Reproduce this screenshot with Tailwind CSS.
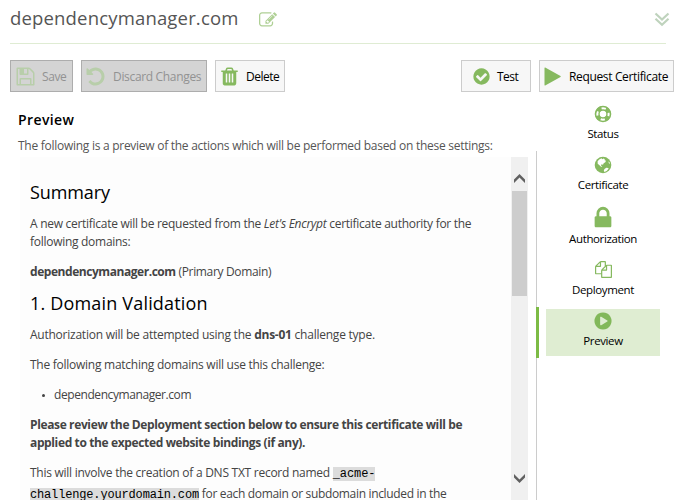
<!DOCTYPE html>
<html lang="en">
<head>
<meta charset="utf-8">
<title>dependencymanager.com</title>
<script src="https://cdn.jsdelivr.net/npm/@tailwindcss/browser@4"></script>
</head>
<body class="bg-white font-['Open_Sans','Noto_Sans',sans-serif] text-[12px] text-[#444]">
<div class="flex h-[500px] w-[680px] flex-col overflow-hidden whitespace-nowrap">
  <header class="mr-[14px] ml-[10px] flex h-[44px] shrink-0 items-start border-b border-[#dfecd3]">
    <h1 class="w-[249px] text-[18.5px] leading-[36px] tracking-[0.17px] text-[#555]">dependencymanager.com</h1>
    <svg class="mt-[11px] size-[18px]" viewBox="0 0 1792 1792" fill="#afd095"><path d="M888 1184l116-116-152-152-116 116v56h96v96h56zm440-720q-16-16-33 1l-350 350q-17 17-1 33t33-1l350-350q17-17 1-33zm80 594v190q0 119-84.500 203.500t-203.500 84.500h-832q-119 0-203.500-84.500t-84.500-203.500v-832q0-119 84.500-203.500t203.500-84.500h832q63 0 117 25 15 7 18 23 3 17-9 29l-49 49q-14 14-32 8-23-6-45-6h-832q-66 0-113 47t-47 113v832q0 66 47 113t113 47h832q66 0 113-47t47-113v-126q0-13 9-22l64-64q15-15 35-7t20 29zm-96-738l288 288-672 672h-288v-288zm444 132l-92 92-288-288 92-92q28-28 68-28t68 28l152 152q28 28 28 68t-28 68z"/></svg>
    <svg class="mt-[12px] -mr-[4px] ml-auto h-[15px] w-[16px]" viewBox="0 0 16 15" fill="none" stroke="#bfd3bd" stroke-width="2.2"><path d="M1.500 1.500L8 7.500L14.500 1.500M1.500 6.800L8 12.800L14.500 6.800"/></svg>
  </header>

  <div class="mt-[16px] mr-[6px] ml-[10px] flex h-[32px] shrink-0 text-[12px] leading-[32px] text-black">
    <button class="flex w-[63px] items-center border border-[#adadad] bg-[#d4d4d4] pl-[4px] text-[#929292]">
      <svg class="mr-[6px] size-[21px]" viewBox="0 0 1792 1792" fill="#b8ceaa"><path d="M512 1536h768v-384h-768v384zm896 0h128v-896q0-14-10-38.500t-20-34.500l-281-281q-10-10-34-20t-39-10v416q0 40-28 68t-68 28h-576q-40 0-68-28t-28-68v-416h-128v1280h128v-416q0-40 28-68t68-28h832q40 0 68 28t28 68v416zm-384-928v-320q0-13-9.500-22.500t-22.500-9.500h-192q-13 0-22.500 9.500t-9.500 22.500v320q0 13 9.500 22.500t22.500 9.500h192q13 0 22.500-9.500t9.500-22.500zm640 32v928q0 40-28 68t-68 28h-1344q-40 0-68-28t-28-68v-1344q0-40 28-68t68-28h928q40 0 88 20t76 48l280 280q28 28 48 76t20 88z"/></svg>
      <span class="mt-[2px] tracking-[-0.4px]">Save</span>
    </button>
    <button class="ml-[8px] flex w-[126px] items-center border border-[#adadad] bg-[#d4d4d4] pl-[3px] text-[#929292]">
      <svg class="mr-[7px] size-[21px]" viewBox="0 0 1792 1792" fill="#b8ceaa"><path d="M1664 896q0 156-61 298t-164 245-245 164-298 61q-172 0-327-72.500t-264-204.500q-7-10-6.500-22.500t8.500-20.500l137-138q10-9 25-9 16 2 23 12 73 95 179 147t225 52q104 0 198.500-40.500t163.500-109.500 109.500-163.500 40.500-198.500-40.500-198.500-109.500-163.500-163.500-109.500-198.500-40.500q-98 0-188 35.500t-160 101.500l137 138q31 30 14 69-17 40-59 40h-448q-26 0-45-19t-19-45v-448q0-42 40-59 39-17 69 14l130 129q107-101 244.500-156.500t284.500-55.500q156 0 298 61t245 164 164 245 61 298z"/></svg>
      <span class="mt-[2px] tracking-[-0.33px]">Discard Changes</span>
    </button>
    <button class="ml-[8px] flex w-[70px] items-center border border-[#ccc] bg-[#f7f7f7] pl-[3px]">
      <svg class="mr-[6px] size-[21px]" viewBox="0 0 1792 1792" fill="#86b95f"><path d="M704 1376v-704q0-14-9-23t-23-9h-64q-14 0-23 9t-9 23v704q0 14 9 23t23 9h64q14 0 23-9t9-23zm256 0v-704q0-14-9-23t-23-9h-64q-14 0-23 9t-9 23v704q0 14 9 23t23 9h64q14 0 23-9t9-23zm256 0v-704q0-14-9-23t-23-9h-64q-14 0-23 9t-9 23v704q0 14 9 23t23 9h64q14 0 23-9t9-23zm-544-992h448l-48-117q-7-9-17-11h-317q-10 2-17 11zm928 32v64q0 14-9 23t-23 9h-96v948q0 83-47 143.500t-113 60.500h-832q-66 0-113-58.500t-47-141.500v-952h-96q-14 0-23-9t-9-23v-64q0-14 9-23t23-9h309l70-167q15-37 54-63t79-26h320q40 0 79 26t54 63l70 167h309q14 0 23 9t9 23z"/></svg>
      <span class="mt-[2px] tracking-[-0.5px]">Delete</span>
    </button>
    <button class="ml-auto flex w-[70px] items-center border border-[#ccc] bg-[#f7f7f7] pl-[10px]">
      <svg class="mr-[6px] size-[19px]" viewBox="0 0 1792 1792" fill="#86b95f"><path d="M1412 734q0-28-18-46l-91-90q-19-19-45-19t-45 19l-408 407-226-226q-19-19-45-19t-45 19l-91 90q-18 18-18 46 0 27 18 45l362 362q19 19 45 19 27 0 46-19l543-543q18-18 18-45zm252 162q0 209-103 385.500t-279.500 279.500-385.500 103-385.500-103-279.500-279.500-103-385.500 103-385.500 279.500-279.500 385.500-103 385.500 103 279.500 279.500 103 385.500z"/></svg>
      <span class="mt-[2px] tracking-[-0.5px]">Test</span>
    </button>
    <button class="ml-[8px] flex w-[135px] items-center border border-[#ccc] bg-[#f7f7f7] pl-[4px]">
      <svg class="mr-[8px] h-[19px] w-[17px]" viewBox="0 0 17 19" fill="#86b95f"><path d="M0.500 1Q0.500 0.300 1.200 0.600L16.500 9Q17 9.500 16.500 10L1.200 18.400Q0.500 18.700 0.500 18Z"/></svg>
      <span class="mt-[2px] tracking-[-0.35px]">Request Certificate</span>
    </button>
  </div>

  <div class="flex min-h-0 flex-1">
    <main class="flex w-[528px] shrink-0 flex-col">
      <h2 class="mt-[17px] ml-[18px] text-[14px] leading-[22px] font-semibold tracking-[0.4px] text-black">Preview</h2>
      <p class="mt-[5px] ml-[18px] text-[12px] leading-[20px] tracking-[-0.27px] text-[#555]">The following is a preview of the actions which will be performed based on these settings:</p>
      <div class="mt-[1px] ml-[20px] flex min-h-0 flex-1">
        <article class="w-[491px] shrink-0 overflow-hidden bg-[#fdfdfd] pl-[10px] text-[12px] leading-[18px]">
          <h3 class="mt-[22px] text-[18px] leading-[26px] tracking-[-0.1px] text-black">Summary</h3>
          <p class="mt-[10px] tracking-[-0.28px]">A new certificate will be requested from the <em>Let's Encrypt</em> certificate authority for the<br>following domains:</p>
          <p class="mt-[12px] tracking-[-0.33px]"><b class="tracking-[-0.45px]">dependencymanager.com</b> (Primary Domain)</p>
          <h3 class="mt-[9px] text-[18px] leading-[26px] tracking-[0.18px] text-black">1. Domain Validation</h3>
          <p class="mt-[10px] tracking-[-0.24px]">Authorization will be attempted using the <b>dns-01</b> challenge type.</p>
          <p class="mt-[12px] tracking-[-0.26px]">The following matching domains will use this challenge:</p>
          <ul class="mt-[12px] flex"><li class="flex items-center gap-[9px] pl-[12px] tracking-[-0.42px]"><i class="size-[3px] rounded-full bg-[#444]"></i>dependencymanager.com</li></ul>
          <p class="mt-[12px] font-bold tracking-[-0.37px]">Please review the Deployment section below to ensure this certificate will be<br>applied to the expected website bindings (if any).</p>
          <p class="mt-[11px] leading-[20px] tracking-[-0.26px]">This will involve the creation of a DNS TXT record named <code class="bg-[#dcdcdc] font-['Liberation_Mono',monospace] text-[12px] tracking-[-0.1px] text-black">_acme-</code><br><code class="bg-[#dcdcdc] font-['Liberation_Mono',monospace] text-[12px] tracking-[-0.16px] text-black">challenge.yourdomain.com</code><span class="tracking-[-0.33px]"> for each domain or subdomain included in the</span></p>
        </article>
        <div class="flex w-[17px] flex-col bg-[#f0f0f0]">
          <svg class="mt-[16px] ml-[3px] h-[11px] w-[11px] shrink-0" viewBox="0 0 11 11" fill="#606060"><path d="M5.500 1L11 6.500V10L5.500 4.500L0 10V6.500Z"/></svg>
          <div class="mt-[7px] ml-px h-[105px] w-[15px] shrink-0 bg-[#cdcdcd]"></div>
          <svg class="mt-auto mb-[16px] ml-[3px] h-[11px] w-[11px] shrink-0" viewBox="0 0 11 11" fill="#606060"><path d="M5.500 10L11 4.500V1L5.500 6.500L0 1V4.500Z"/></svg>
        </div>
      </div>
    </main>

    <aside class="flex flex-1 text-[11.500px] leading-[16px] tracking-[-0.38px] text-black">
      <div class="mt-[59px] ml-[8px] flex w-[3px] flex-col border-l border-[#ccc]">
        <div class="mt-[156px] -ml-px h-[51px] w-[3px] bg-[#7cbb45]"></div>
      </div>
      <nav class="ml-[7px] flex w-[114px] flex-col text-center">
        <a class="flex h-[51px] flex-col items-center pt-[12px]">
          <svg class="h-[20px] w-[20px]" viewBox="0 0 20 20" fill="none" stroke="#86b95f"><circle cx="10" cy="10" r="7.500" stroke-width="1.600"/><circle cx="10" cy="10" r="4" stroke-width="1.400"/><circle cx="10" cy="10" r="5.800" stroke-width="4.200" stroke-dasharray="4.710 4.400" stroke-dashoffset="-2.200"/></svg>
          <span class="mt-[2px]">Status</span>
        </a>
        <a class="flex h-[51px] flex-col items-center pt-[12px]">
          <svg class="h-[20px] w-[20px]" viewBox="0 0 20 20"><circle cx="10" cy="10" r="8.300" fill="#86b95f"/><path fill="#fff" d="M6.200 4.500L8.500 3.200L9.300 4.200L10.600 3.500L12 4.300L11.300 5.100L13 5.700L12.300 7.300L10.700 8.300L10 9.800L8.500 9.300L8 10.500L9.300 12L8 11.800L6.200 9.900L4.700 8.800L4.600 6.300ZM11.500 14L13.300 12.700L15.200 12.900L15.600 13.700Q14 16.300 11.400 17L10.800 15.500ZM15.400 6.400L16.400 7L17 9L15.900 8.300Z"/></svg>
          <span class="mt-[2px]">Certificate</span>
        </a>
        <a class="flex h-[54px] flex-col items-center pt-[11px]">
          <svg class="h-[26px] w-[26px] shrink-0" viewBox="0 0 1792 1792" fill="#86b95f"><path d="M640 768h512v-192q0-106-75-181t-181-75-181 75-75 181v192zm832 96v576q0 40-28 68t-68 28h-960q-40 0-68-28t-28-68v-576q0-40 28-68t68-28h32v-192q0-184 132-316t316-132 316 132 132 316v192h32q40 0 68 28t28 68z"/></svg>
          <span>Authorization</span>
        </a>
        <a class="flex h-[51px] flex-col items-center pt-[13px]">
          <svg class="h-[17px] w-[17px] shrink-0" viewBox="0 0 1792 1792" fill="#86b95f"><path d="M1696 384q40 0 68 28t28 68v1216q0 40-28 68t-68 28h-960q-40 0-68-28t-28-68v-288h-544q-40 0-68-28t-28-68v-672q0-40 20-88t48-76l408-408q28-28 76-48t88-20h416q40 0 68 28t28 68v328q68-40 128-40h416zm-544 213l-299 299h299v-299zm-640-384l-299 299h299v-299zm196 647l316-316v-416h-384v416q0 40-28 68t-68 28h-416v640h512v-256q0-40 20-88t48-76zm956 804v-1152h-384v416q0 40-28 68t-68 28h-416v640h896z"/></svg>
          <span class="mt-[4px]">Deployment</span>
        </a>
        <a class="mt-[10px] flex h-[47px] flex-col items-center bg-[#dfedd2] pt-[2px]">
          <svg class="h-[20px] w-[20px] shrink-0" viewBox="0 0 1792 1792" fill="#82b85a"><path d="M896 128q209 0 385.500 103t279.500 279.500 103 385.500-103 385.500-279.500 279.500-385.500 103-385.500-103-279.500-279.500-103-385.500 103-385.500 279.500-279.500 385.500-103zm384 823q32-18 32-55t-32-55l-544-320q-31-19-64-1-32 19-32 56v640q0 37 32 56 16 8 32 8 17 0 32-9z"/></svg>
          <span class="mt-[2px]">Preview</span>
        </a>
      </nav>
    </aside>
  </div>
</div>
</body>
</html>
